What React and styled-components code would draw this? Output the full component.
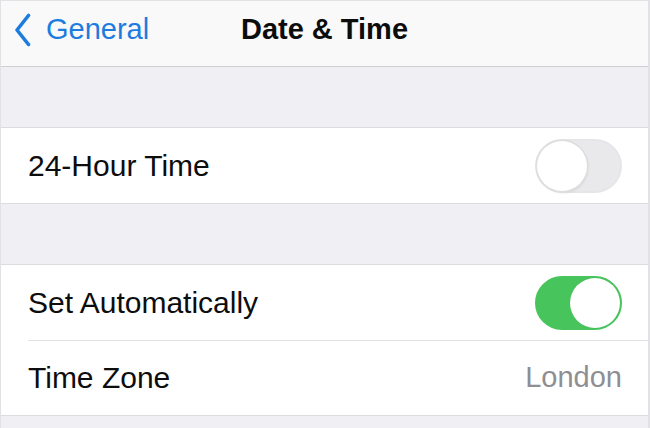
import React from "react";
import styled, { createGlobalStyle } from "styled-components";

const GlobalStyle = createGlobalStyle`
  html, body {
    margin: 0;
    padding: 0;
    background: #efeff4;
  }
  body {
    font-family: "Liberation Sans", Arial, sans-serif;
    -webkit-font-smoothing: antialiased;
  }
`;

const Screen = styled.div`
  width: 650px;
  height: 428px;
  box-sizing: border-box;
  overflow: hidden;
  background: #efeff4;
  border: 1px solid #e2e2e6;
  border-bottom: none;
  border-right-width: 2px;
  display: flex;
  flex-direction: column;
`;

const NavBar = styled.header`
  height: 66px;
  flex: none;
  box-sizing: border-box;
  padding: 0 0 8px;
  background: #f9f9fa;
  border-bottom: 1px solid #cfcfd4;
  display: grid;
  grid-template-columns: 1fr auto 1fr;
  align-items: center;
`;

const BackButton = styled.button`
  justify-self: start;
  display: flex;
  align-items: center;
  gap: 15px;
  padding: 0 0 0 13px;
  margin: 0;
  border: none;
  background: none;
  color: #1c7ddf;
  font-family: inherit;
  font-size: 29px;
  line-height: 1;
  cursor: pointer;
`;

const Title = styled.h1`
  margin: 0;
  font-size: 29px;
  font-weight: 700;
  color: #0c0c0c;
  line-height: 1;
`;

const Gap = styled.div`
  height: ${(p) => p.$h}px;
  flex: none;
`;

const Group = styled.section`
  background: #ffffff;
  border-top: 1px solid #dcdce0;
  border-bottom: 1px solid #dcdce0;
  flex: none;
`;

const Row = styled.div`
  height: 75px;
  box-sizing: border-box;
  padding: 0 26px 0 27px;
  display: flex;
  align-items: center;
  justify-content: space-between;
  position: relative;

  & + &::before {
    content: "";
    position: absolute;
    top: 0;
    left: 27px;
    right: 0;
    height: 1px;
    background: #e2e2e6;
  }
`;

const Label = styled.span`
  font-size: 30px;
  color: #0d0d0d;
  line-height: 1;
`;

const Detail = styled.span`
  font-size: 29px;
  color: #8e8e93;
  line-height: 1;
`;

const Track = styled.div`
  width: 87px;
  height: 54px;
  box-sizing: border-box;
  border-radius: 27px;
  border: 2px solid ${(p) => (p.$on ? "#48c45c" : "#e6e6e8")};
  background: ${(p) => (p.$on ? "#48c45c" : "#e9e9eb")};
  display: flex;
  align-items: center;
  justify-content: ${(p) => (p.$on ? "flex-end" : "flex-start")};
`;

const Knob = styled.div`
  width: 50px;
  height: 50px;
  border-radius: 50%;
  background: #ffffff;
  box-shadow: ${(p) =>
    p.$on
      ? "0 0 0 0.5px rgba(0,0,0,0.04)"
      : "0 0 0 1.5px #dddddf, 1px 2px 3px rgba(0,0,0,0.08)"};
`;

const Chevron = () => (
  <svg width="17" height="34" viewBox="0 0 17 34" aria-hidden="true">
    <path
      d="M14.5 2.5 L3 17 L14.5 31.5"
      fill="none"
      stroke="#1c7ddf"
      strokeWidth="3.6"
      strokeLinecap="round"
      strokeLinejoin="round"
    />
  </svg>
);

const Switch = ({ on }) => (
  <Track $on={on} role="switch" aria-checked={on}>
    <Knob $on={on} />
  </Track>
);

export default function App() {
  return (
    <>
      <GlobalStyle />
      <Screen>
        <NavBar>
          <BackButton>
            <Chevron />
            General
          </BackButton>
          <Title>Date &amp; Time</Title>
          <span />
        </NavBar>
        <Gap $h={60} />
        <Group>
          <Row>
            <Label>24-Hour Time</Label>
            <Switch on={false} />
          </Row>
        </Group>
        <Gap $h={60} />
        <Group>
          <Row>
            <Label>Set Automatically</Label>
            <Switch on />
          </Row>
          <Row>
            <Label>Time Zone</Label>
            <Detail>London</Detail>
          </Row>
        </Group>
      </Screen>
    </>
  );
}
